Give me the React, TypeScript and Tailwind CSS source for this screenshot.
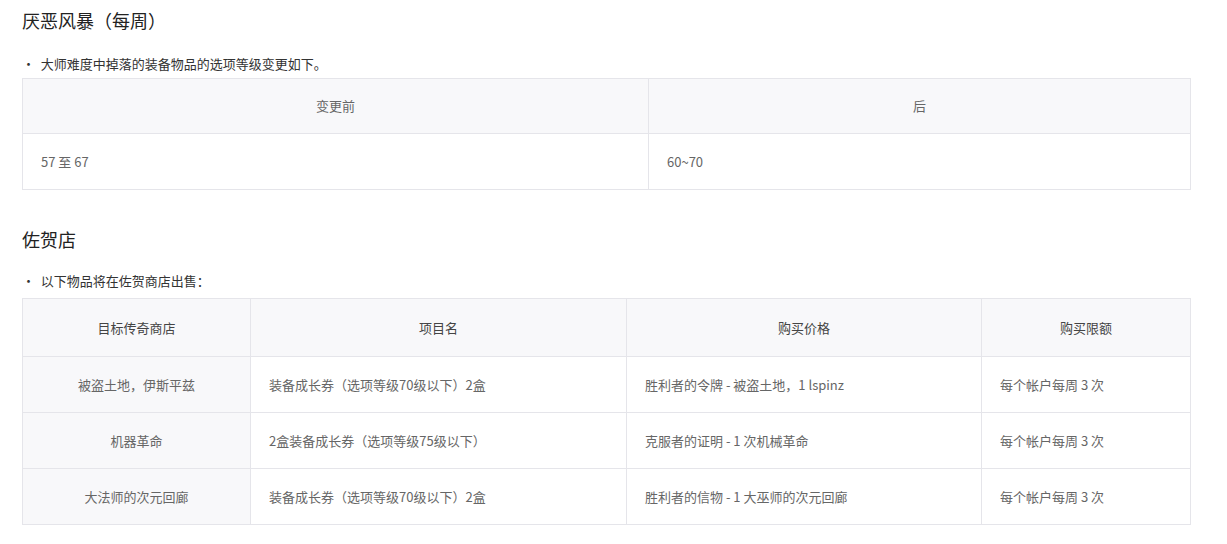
export default function App() {
  const f = { fontFamily: '"Noto Sans CJK SC", "Noto Sans", sans-serif' };
  const b = "border-[#e5e5ea]";
  const rows = [
    ["被盗土地，伊斯平兹", "装备成长券（选项等级70级以下）2盒", "胜利者的令牌 - 被盗土地，1 lspinz", "每个帐户每周 3 次"],
    ["机器革命", "2盒装备成长券（选项等级75级以下）", "克服者的证明 - 1 次机械革命", "每个帐户每周 3 次"],
    ["大法师的次元回廊", "装备成长券（选项等级70级以下）2盒", "胜利者的信物 - 1 大巫师的次元回廊", "每个帐户每周 3 次"],
  ];
  return (
    <div style={f} className="w-[1227px] h-[544px] bg-white pl-[22px] pr-[36px] text-[#666]">
      <div className="pt-[7px] h-[46px] text-[18px] text-[#222] leading-[26px]">厌恶风暴（每周）</div>
      <div className="h-[32px] pt-[8px] text-[13px] text-[#333] leading-[20px]">·&nbsp; 大师难度中掉落的装备物品的选项等级变更如下。</div>
      <table className={`w-full border-collapse border ${b} text-[13px]`}>
        <tbody>
          <tr className="h-[55px] bg-[#f8f8fa]">
            <td className={`border ${b} text-center w-[626px]`}>变更前</td>
            <td className={`border ${b} text-center`}>后</td>
          </tr>
          <tr className="h-[56px]">
            <td className={`border ${b} pl-[18px]`}>57 至 67</td>
            <td className={`border ${b} pl-[18px]`}>60~70</td>
          </tr>
        </tbody>
      </table>
      <div className="pt-[36px] h-[78px] text-[18px] text-[#222] leading-[26px]">佐贺店</div>
      <div className="h-[30px] pt-[3px] text-[13px] text-[#333] leading-[20px]">·&nbsp; 以下物品将在佐贺商店出售：</div>
      <table className={`w-full border-collapse border ${b} text-[13px]`}>
        <tbody>
          <tr className="h-[58px] bg-[#f8f8fa] text-[#444]">
            <td className={`border ${b} text-center w-[228px]`}>目标传奇商店</td>
            <td className={`border ${b} text-center w-[376px]`}>项目名</td>
            <td className={`border ${b} text-center w-[355px]`}>购买价格</td>
            <td className={`border ${b} text-center`}>购买限额</td>
          </tr>
          {rows.map((r, i) => (
            <tr key={i} className="h-[56px]">
              <td className={`border ${b} text-center bg-[#f8f8fa]`}>{r[0]}</td>
              <td className={`border ${b} pl-[18px]`}>{r[1]}</td>
              <td className={`border ${b} pl-[18px]`}>{r[2]}</td>
              <td className={`border ${b} pl-[18px]`}>{r[3]}</td>
            </tr>
          ))}
        </tbody>
      </table>
    </div>
  );
}
